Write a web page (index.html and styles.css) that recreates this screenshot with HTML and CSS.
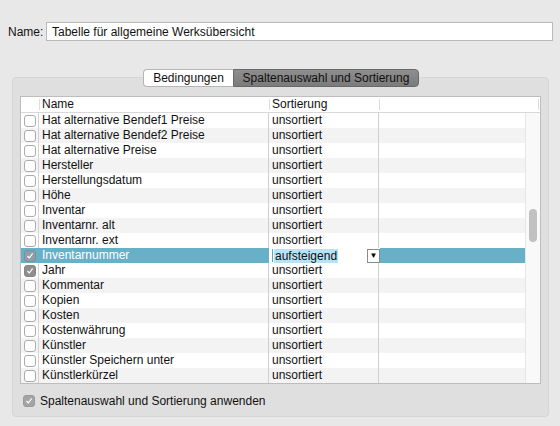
FILE: index.html
```html
<!DOCTYPE html>
<html>
<head>
<meta charset="utf-8">
<link rel="stylesheet" href="styles.css">
</head>
<body>
<div class="window">
  <div class="name-row">
    <label class="name-label">Name:</label>
    <div class="name-input">Tabelle für allgemeine Werksübersicht</div>
  </div>

  <div class="tabview">
    <div class="tabs">
      <div class="tab">Bedingungen</div>
      <div class="tab tab-active">Spaltenauswahl und Sortierung</div>
    </div>
    <div class="groupbox">
      <div class="table">
        <div class="thead">
          <div class="hc hc-check"></div>
          <div class="hc hc-name">Name</div>
          <div class="hc hc-sort">Sortierung</div>
          <div class="hc hc-rest"></div>
        </div>
        <div class="tbody">
          <div class="rows">
            <div class="row"><div class="c-check"><span class="cb"></span></div><div class="c-name">Hat alternative Bendef1 Preise</div><div class="c-sort">unsortiert</div><div class="c-rest"></div></div>
            <div class="row"><div class="c-check"><span class="cb"></span></div><div class="c-name">Hat alternative Bendef2 Preise</div><div class="c-sort">unsortiert</div><div class="c-rest"></div></div>
            <div class="row"><div class="c-check"><span class="cb"></span></div><div class="c-name">Hat alternative Preise</div><div class="c-sort">unsortiert</div><div class="c-rest"></div></div>
            <div class="row"><div class="c-check"><span class="cb"></span></div><div class="c-name">Hersteller</div><div class="c-sort">unsortiert</div><div class="c-rest"></div></div>
            <div class="row"><div class="c-check"><span class="cb"></span></div><div class="c-name">Herstellungsdatum</div><div class="c-sort">unsortiert</div><div class="c-rest"></div></div>
            <div class="row"><div class="c-check"><span class="cb"></span></div><div class="c-name">Höhe</div><div class="c-sort">unsortiert</div><div class="c-rest"></div></div>
            <div class="row"><div class="c-check"><span class="cb"></span></div><div class="c-name">Inventar</div><div class="c-sort">unsortiert</div><div class="c-rest"></div></div>
            <div class="row"><div class="c-check"><span class="cb"></span></div><div class="c-name">Inventarnr. alt</div><div class="c-sort">unsortiert</div><div class="c-rest"></div></div>
            <div class="row"><div class="c-check"><span class="cb"></span></div><div class="c-name">Inventarnr. ext</div><div class="c-sort">unsortiert</div><div class="c-rest"></div></div>
            <div class="row row-sel"><div class="c-check"><span class="cb cb-on"><svg viewBox="0 0 12 12"><path d="M3.3 6.3 L5.2 8.4 L8.8 3.4" fill="none" stroke="#fff" stroke-width="1.4" stroke-linecap="round" stroke-linejoin="round"/></svg></span></div><div class="c-name">Inventarnummer</div><div class="c-sort c-edit"><span class="caret"></span><span class="sel-text">aufsteigend</span><span class="dd">&#9660;</span></div><div class="c-rest"></div></div>
            <div class="row"><div class="c-check"><span class="cb cb-on"><svg viewBox="0 0 12 12"><path d="M3.3 6.3 L5.2 8.4 L8.8 3.4" fill="none" stroke="#fff" stroke-width="1.4" stroke-linecap="round" stroke-linejoin="round"/></svg></span></div><div class="c-name">Jahr</div><div class="c-sort">unsortiert</div><div class="c-rest"></div></div>
            <div class="row"><div class="c-check"><span class="cb"></span></div><div class="c-name">Kommentar</div><div class="c-sort">unsortiert</div><div class="c-rest"></div></div>
            <div class="row"><div class="c-check"><span class="cb"></span></div><div class="c-name">Kopien</div><div class="c-sort">unsortiert</div><div class="c-rest"></div></div>
            <div class="row"><div class="c-check"><span class="cb"></span></div><div class="c-name">Kosten</div><div class="c-sort">unsortiert</div><div class="c-rest"></div></div>
            <div class="row"><div class="c-check"><span class="cb"></span></div><div class="c-name">Kostenwährung</div><div class="c-sort">unsortiert</div><div class="c-rest"></div></div>
            <div class="row"><div class="c-check"><span class="cb"></span></div><div class="c-name">Künstler</div><div class="c-sort">unsortiert</div><div class="c-rest"></div></div>
            <div class="row"><div class="c-check"><span class="cb"></span></div><div class="c-name">Künstler Speichern unter</div><div class="c-sort">unsortiert</div><div class="c-rest"></div></div>
            <div class="row"><div class="c-check"><span class="cb"></span></div><div class="c-name">Künstlerkürzel</div><div class="c-sort">unsortiert</div><div class="c-rest"></div></div>
          </div>
          <div class="scrollbar"><div class="thumb"></div></div>
        </div>
      </div>
      <div class="apply-row">
        <span class="cb cb-on cb-dis"><svg viewBox="0 0 12 12"><path d="M3.3 6.3 L5.2 8.4 L8.8 3.4" fill="none" stroke="#fff" stroke-width="1.4" stroke-linecap="round" stroke-linejoin="round"/></svg></span>
        <span class="apply-label">Spaltenauswahl und Sortierung anwenden</span>
      </div>
    </div>
  </div>
</div>
</body>
</html>
```

FILE: styles.css
```css
* { box-sizing: border-box; }
html, body { margin: 0; padding: 0; }
body {
  width: 560px;
  height: 426px;
  background: #e8e8e8;
  font-family: "Liberation Sans", Arial, sans-serif;
  font-size: 12px;
  color: #111;
  overflow: hidden;
}
.window {
  display: flex;
  flex-direction: column;
  padding: 22px 7px 0 8px;
}
.name-row {
  display: flex;
  align-items: center;
  gap: 8px;
  height: 19px;
}
.name-label { width: 30px; }
.name-input {
  flex: 1;
  height: 19px;
  background: #fff;
  border: 1px solid #b9b9b9;
  padding: 2px 0 0 5px;
  line-height: 14px;
}
.tabview {
  display: flex;
  flex-direction: column;
  align-items: center;
  margin: 28px 4px 0 4px;
}
.tabs {
  display: flex;
  height: 18px;
  margin-bottom: -10px;
  position: relative;
  z-index: 2;
  margin-left: 1px;
}
.tab {
  height: 18px;
  line-height: 16px;
  padding: 0;
  white-space: nowrap;
  background: #fff;
  border: 1px solid #b5b5b5;
  border-right: none;
  border-radius: 4px 0 0 4px;
  width: 90px;
  text-align: center;
}
.tab-active {
  width: 186px;
  border: 1px solid #6a6a6a;
  border-radius: 0 4px 4px 0;
  background: linear-gradient(#8e8e8e, #7b7b7b);
  color: #111;
}
.groupbox {
  align-self: stretch;
  height: 340px;
  background: #dfdfdf;
  border: 1px solid #d6d6d6;
  border-radius: 4px;
  padding: 18px 7px 0 7px;
  display: flex;
  flex-direction: column;
}
.table {
  height: 288px;
  border: 1px solid #bdbdbd;
  background: #fff;
  display: flex;
  flex-direction: column;
}
.thead {
  display: flex;
  height: 16px;
  border-bottom: 1px solid #d8d8d8;
  background: #fff;
  line-height: 15px;
}
.hc { position: relative; padding-left: 3px; }
.hc-check { width: 18px; }
.hc-name { width: 230px; }
.hc-sort { width: 110px; }
.hc-rest { flex: 1; }
.hc-name::before, .hc-sort::before, .hc-rest::before, .hc-rest::after {
  content: "";
  position: absolute;
  left: 0;
  top: 2px;
  height: 11px;
  border-left: 1px solid #dcdcdc;
}
.hc-rest::after { left: auto; right: 1px; }
.tbody {
  flex: 1;
  display: flex;
  overflow: hidden;
}
.rows { flex: 1; }
.row {
  display: flex;
  height: 15px;
  line-height: 15px;
  background: #fff;
}
.row:nth-child(even) { background: #f3f3f3; }
.row.row-sel { background: #67b0c8; color: #fff; }
.c-check {
  width: 18px;
  display: flex;
  align-items: center;
  padding-left: 3px;
  border-right: 1px solid #d4d4d4;
}
.c-name { width: 230px; padding-left: 3px; border-right: 1px solid #cfcfcf; white-space: nowrap; }
.c-sort { width: 110px; padding-left: 3px; border-right: 1px solid #cfcfcf; }
.c-rest { flex: 1; }
.row-sel .c-check { border-right-color: #67b0c8; }
.row-sel .c-name { border-right-color: #67b0c8; }
.c-edit {
  background: #fff;
  color: #111;
  display: flex;
  align-items: center;
  padding-left: 3px;
  border-right: none;
  width: 111px;
}
.caret { width: 1px; height: 13px; background: #5aa9c8; margin-right: 1px; }
.sel-text { background: #b5e4f7; padding: 0 1px; line-height: 14px; }
.dd {
  margin-left: auto;
  width: 13px;
  height: 14px;
  border: 1px solid #8a8a8a;
  background: #fff;
  font-size: 8px;
  line-height: 12px;
  text-align: center;
  color: #000;
}
.cb {
  width: 12px;
  height: 12px;
  border: 1px solid #ababab;
  border-radius: 3px;
  background: #fff;
  display: inline-flex;
}
.cb svg { width: 10px; height: 10px; }
.cb-on { background: #8f8f8f; border-color: #858585; }
.row-sel .cb-on { background: #8c9ea6; border-color: #7d8f97; }
.cb-dis { background: #a4a4a4; border-color: #9a9a9a; }
.scrollbar {
  width: 15px;
  background: #f9f9f9;
  border-left: 1px solid #e6e6e6;
  position: relative;
}
.thumb {
  position: absolute;
  left: 3px;
  top: 96px;
  width: 8px;
  height: 33px;
  border-radius: 4px;
  background: #c1c1c1;
}
.apply-row {
  display: flex;
  align-items: center;
  gap: 5px;
  margin-top: 10px;
  padding-left: 3px;
}
```
